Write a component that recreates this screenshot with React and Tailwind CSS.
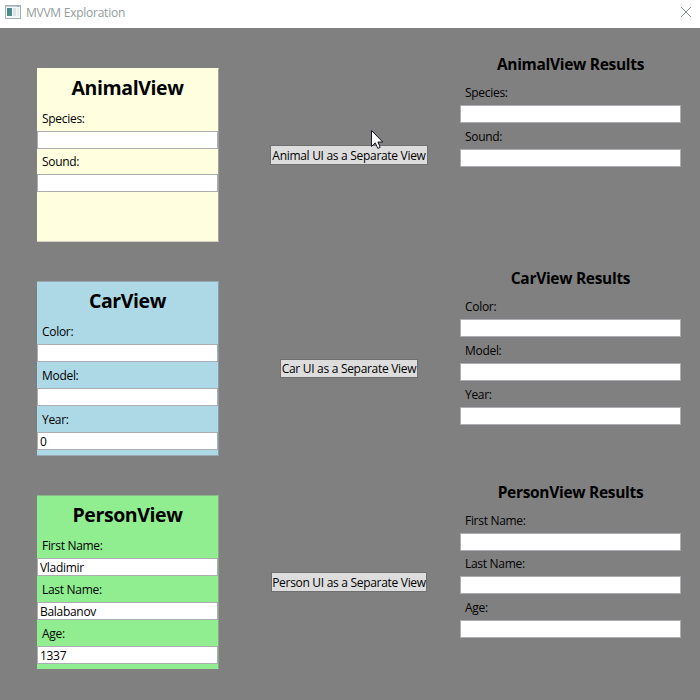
const FONT = "font-['Open_Sans','Noto_Sans',sans-serif]";

const views = [
  {
    title: 'AnimalView',
    card: 'mt-[40px] h-[174px] bg-[#ffffe0] border-b-[#d4d4c4] border-t-[#ffffe0] border-r-[#a0a09c]',
    fields: [
      { label: 'Species:', h: 'h-[24px]', value: '' },
      { label: 'Sound:', h: 'h-[25px]', value: '' },
    ],
  },
  {
    title: 'CarView',
    card: 'mt-[39px] h-[175px] bg-[#add8e6] border-b-[#98a8b0] border-t-[#98a8b0] border-r-[#8a9ca4]',
    fields: [
      { label: 'Color:', h: 'h-[24px]', value: '' },
      { label: 'Model:', h: 'h-[26px]', value: '' },
      { label: 'Year:', h: 'h-[26px]', value: '0' },
    ],
  },
  {
    title: 'PersonView',
    card: 'mt-[39px] h-[174px] bg-[#90ee90] border-b-[#90ee90] border-t-[#8ab88a] border-r-[#88a888]',
    fields: [
      { label: 'First Name:', h: 'h-[24px]', value: 'Vladimir' },
      { label: 'Last Name:', h: 'h-[26px]', value: 'Balabanov' },
      { label: 'Age:', h: 'h-[26px]', value: '1337' },
    ],
  },
];

const buttons = [
  { text: 'Animal UI as a Separate View', box: 'mt-[117px] h-[20px] w-[158px] pt-px' },
  { text: 'Car UI as a Separate View', box: 'mt-[194px] h-[19px] w-[138px]' },
  { text: 'Person UI as a Separate View', box: 'mt-[194px] h-[20px] w-[156px] pt-px' },
];

const results = [
  {
    title: 'AnimalView Results',
    fields: [['Species:', 'h-[25px]'], ['Sound:', 'h-[26px]']],
  },
  {
    title: 'CarView Results',
    fields: [['Color:', 'h-[25px]'], ['Model:', 'h-[26px]'], ['Year:', 'h-[26px]']],
  },
  {
    title: 'PersonView Results',
    fields: [['First Name:', 'h-[25px]'], ['Last Name:', 'h-[25px]'], ['Age:', 'h-[26px]']],
  },
];

function Field({ label, h, value }) {
  return (
    <>
      <div className={`${h} flex flex-col justify-end pl-[5px] pb-[4px]`}>
        <span className="text-[12px] leading-[16px] tracking-[-0.3px]">{label}</span>
      </div>
      <div className="h-[18px] border border-[#abadb3] bg-white pl-[2px] text-[12px] leading-[18px] tracking-[-0.3px]">
        {value}
      </div>
    </>
  );
}

function WindowIcon() {
  return (
    <svg width="16" height="14" viewBox="0 0 16 14" shapeRendering="crispEdges">
      <rect x="0.5" y="0.5" width="15" height="13" fill="#f4f7f8" stroke="#a3afb3" />
      <rect x="1" y="1" width="14" height="1" fill="#c3ced4" />
      <rect x="12" y="1" width="2" height="1" fill="#8aa6cc" />
      <rect x="2" y="3" width="5" height="8" fill="#4c8c88" />
      <rect x="2" y="3" width="2" height="3" fill="#4a7f9a" />
      <rect x="8" y="3" width="3" height="8" fill="#dde2e6" />
      <rect x="12" y="3" width="2" height="8" fill="#e9edf0" />
    </svg>
  );
}

function Cursor() {
  return (
    <svg className="absolute left-[371px] top-[129px]" width="13" height="21" viewBox="0 0 13 21">
      <path
        d="M0.5 1.5V17.5L4.3 13.9L6.8 19.4L9.2 18.4L6.9 13H11.8Z"
        fill="#fff"
        stroke="#15151f"
        strokeWidth="1"
      />
    </svg>
  );
}

export default function App() {
  return (
    <div className={`relative h-[700px] w-[700px] overflow-hidden bg-[#808080] text-black ${FONT}`}>
      <header className="flex h-[28px] items-start bg-white pl-[5px] pt-[5px]">
        <WindowIcon />
        <span className="ml-[5px] text-[12px] leading-[16px] tracking-[-0.25px] text-[#929c9c]">MVVM Exploration</span>
        <svg className="ml-auto mr-[8px] mt-[1px]" width="12" height="12" viewBox="0 0 12 12">
          <path d="M1 1L11 11M11 1L1 11" stroke="#80908f" strokeWidth="1" />
        </svg>
      </header>
      <main className="flex">
        <section className="ml-[37px] w-[182px]">
          {views.map((v) => (
            <div key={v.title} className={`${v.card} border-y border-r`}>
              <h1 className="h-[38px] text-center text-[19.5px] font-bold leading-[38px] tracking-[-0.4px]">
                {v.title}
              </h1>
              {v.fields.map((f) => (
                <Field key={f.label} {...f} />
              ))}
            </div>
          ))}
        </section>
        <section className="ml-[51px] flex w-[158px] flex-col items-center">
          {buttons.map((b) => (
            <button
              key={b.text}
              className={`${b.box} flex shrink-0 items-center justify-center whitespace-nowrap border border-[#707070] bg-[#dddddd] text-[12px] leading-[16px] tracking-[-0.3px]`}
            >
              {b.text}
            </button>
          ))}
        </section>
        <section className="ml-[32px] w-[221px]">
          {results.map((r) => (
            <div key={r.title} className="h-[214px] pt-[24px]">
              <h2 className="h-[28px] text-center text-[15.5px] font-bold leading-[24px] tracking-[-0.3px]">{r.title}</h2>
              {r.fields.map(([label, h]) => (
                <Field key={label} label={label} h={h} value="" />
              ))}
            </div>
          ))}
        </section>
      </main>
      <Cursor />
    </div>
  );
}
